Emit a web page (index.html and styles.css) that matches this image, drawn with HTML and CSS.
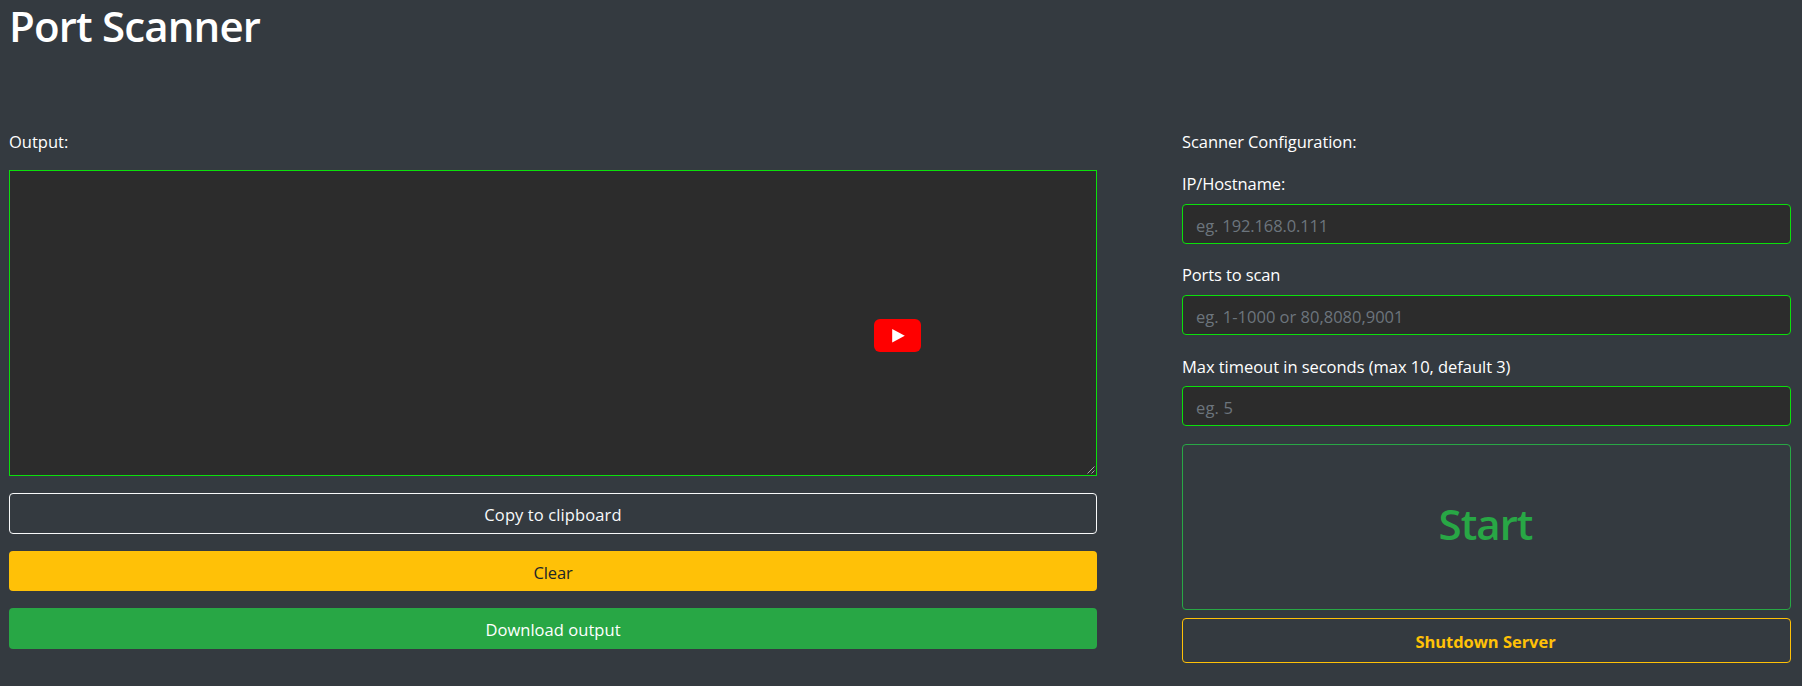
FILE: index.html
```
<!DOCTYPE html>
<html lang="en">
<head>
<meta charset="utf-8">
<title>Port Scanner</title>
<link rel="stylesheet" href="styles.css">
</head>
<body>
<main class="page">
  <h1 class="title">Port Scanner</h1>
  <div class="columns">
    <section class="output">
      <p class="caption cap-output">Output:</p>
      <div class="console-wrap">
        <textarea class="console" aria-label="Output"></textarea>
        <svg class="grip" width="8" height="8" viewBox="0 0 8 8"><path d="M.5 7.500l7-7M4.500 7.500l3-3"/></svg>
        <svg class="video-badge" width="48" height="34" viewBox="0 0 48 34"><rect class="badge-body" x="0" y="0" width="47" height="33" rx="6"/><path class="badge-play" d="M18.200 10v13.500l12.600-6.700z"/></svg>
      </div>
      <button class="btn btn-copy">Copy to clipboard</button>
      <button class="btn btn-clear">Clear</button>
      <button class="btn btn-download">Download output</button>
    </section>
    <section class="config">
      <p class="caption cap-config">Scanner Configuration:</p>
      <label class="label label-ip" for="ip">IP/Hostname:</label>
      <input class="field field-ip" id="ip" placeholder="eg. 192.168.0.111">
      <label class="label label-ports" for="ports">Ports to scan</label>
      <input class="field field-ports" id="ports" placeholder="eg. 1-1000 or 80,8080,9001">
      <label class="label label-timeout" for="timeout">Max timeout in seconds (max 10, default 3)</label>
      <input class="field field-timeout" id="timeout" placeholder="eg. 5">
      <button class="btn btn-start">Start</button>
      <button class="btn btn-shutdown">Shutdown Server</button>
    </section>
  </div>
</main>
</body>
</html>
```
FILE: styles.css
```
* {
  box-sizing: border-box;
}

body {
  margin: 0;
  background: #343a40;
  color: #fff;
  font: 16.5px/24px "Open Sans", "Noto Sans", sans-serif;
}

.page {
  height: 686px;
  padding: 0 11px 0 9px;
}

.title {
  margin: 0;
  height: 130px;
  font-size: 42px;
  line-height: 52px;
  font-weight: 600;
  letter-spacing: -0.84px;
}

.columns {
  display: grid;
  grid-template-columns: 1088px 609px;
  column-gap: 85px;
}

.output,
.config {
  display: flex;
  flex-direction: column;
}

.caption {
  margin: 0;
  height: 40px;
}

.cap-config {
  height: 42px;
  letter-spacing: -0.08px;
}

.console-wrap {
  position: relative;
  height: 306px;
  margin-bottom: 17px;
}

.console {
  display: block;
  width: 100%;
  height: 100%;
  padding: 6px 12px;
  border: 1px solid #0be00b;
  border-radius: 0;
  background: #2c2c2c;
  color: #fff;
  font: inherit;
  resize: none;
}

.grip {
  position: absolute;
  right: 2px;
  bottom: 2px;
  fill: none;
  stroke: #c8c8c8;
  stroke-width: 0.8;
}

.video-badge {
  position: absolute;
  left: 865px;
  top: 149px;
}

.badge-body {
  fill: #f00;
}

.badge-play {
  fill: #fff;
}

.label {
  height: 32px;
}

.label-ip,
.label-ports {
  letter-spacing: -0.12px;
}

.label-timeout {
  padding-top: 1px;
  letter-spacing: -0.04px;
}

.field {
  height: 40px;
  margin-bottom: 19px;
  padding: 2px 13px 0;
  border: 1px solid #0be00b;
  border-radius: 4px;
  background: #2c2c2c;
  color: #fff;
  font: inherit;
}

.field::placeholder {
  color: #6c757d;
  opacity: 1;
}

.field-ip {
  letter-spacing: -0.12px;
}

.field-timeout {
  margin-bottom: 18px;
  letter-spacing: 0.15px;
}

.btn {
  height: 41px;
  margin-bottom: 17px;
  padding: 2px 0 0;
  border: 1px solid transparent;
  border-radius: 4px;
  background: transparent;
  font: inherit;
}

.btn-copy {
  border-color: #f8f9fa;
  color: #f8f9fa;
  letter-spacing: 0.11px;
}

.btn-clear {
  height: 40px;
  padding-top: 3px;
  background: #ffc107;
  color: #212529;
  letter-spacing: -0.1px;
}

.btn-download {
  background: #28a745;
  color: #fff;
  letter-spacing: 0.05px;
}

.btn-start {
  height: 166px;
  margin-bottom: 8px;
  padding: 0 2px 6px 0;
  border-color: #28a745;
  color: #28a745;
  font-size: 42px;
  font-weight: 600;
  letter-spacing: -1px;
}

.btn-shutdown {
  height: 45px;
  padding-right: 2px;
  border-color: #ffc107;
  color: #ffc107;
  font-weight: 700;
  letter-spacing: -0.04px;
}
```
